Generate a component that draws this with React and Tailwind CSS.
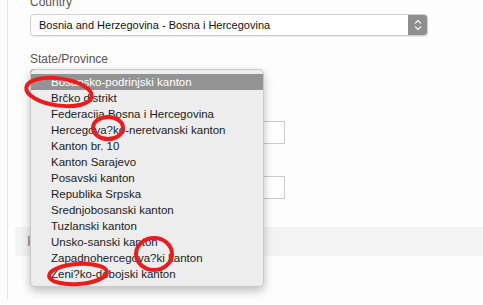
import React from 'react';

const states = [
  'Bosansko-podrinjski kanton',
  'Brčko distrikt',
  'Federacija Bosna i Hercegovina',
  'Hercegova?ko-neretvanski kanton',
  'Kanton br. 10',
  'Kanton Sarajevo',
  'Posavski kanton',
  'Republika Srpska',
  'Srednjobosanski kanton',
  'Tuzlanski kanton',
  'Unsko-sanski kanton',
  'Zapadnohercegova?ki kanton',
  'Zeni?ko-dobojski kanton',
];

// 빨간 원 표시 (스크린샷 위 주석)
const marks = [
  { cx: 59, cy: 92, rx: 33, ry: 13.5, rot: 8 },
  { cx: 108, cy: 128, rx: 15, ry: 11, rot: 0 },
  { cx: 154, cy: 254, rx: 18, ry: 16, rot: 0 },
  { cx: 78, cy: 274, rx: 29, ry: 10, rot: -4 },
];

const App = () => {
  return (
    <div
      className="relative w-[483px] h-[305px] overflow-hidden bg-[#fdfdfd] text-[11px]"
      style={{ fontFamily: '"Liberation Sans", Arial, sans-serif' }}
    >
      {/* 왼쪽 세로선 + 폼 영역 */}
      <div className="ml-[7px] h-full border-l border-[#e4e4e4] pl-[7px]">
        <div className="-mt-[6px] pl-[15px]">
          <label className="block h-[16px] text-[12px] leading-[16px] text-[#555]">Country</label>
          <div className="mt-[4px] flex h-[22px] w-[398px] items-stretch rounded-[4px] border border-[#cfcfcf] bg-white shadow-[0_1px_1px_rgba(0,0,0,0.08)]">
            <div className="flex-1 pl-[8px] text-[11px] leading-[20px] text-[#111]">
              Bosnia and Herzegovina - Bosna i Hercegovina
            </div>
            <div className="flex w-[19px] flex-col items-center justify-center rounded-r-[3px] bg-[#8e8e8e]">
              <svg width="8" height="12" viewBox="0 0 8 12" fill="none" stroke="#f2f2f2" strokeWidth="1.3">
                <path d="M1 4.5 L4 1.5 L7 4.5" />
                <path d="M1 7.5 L4 10.5 L7 7.5" />
              </svg>
            </div>
          </div>

          <label className="mt-[15px] block h-[16px] text-[12px] leading-[16px] text-[#555]">State/Province</label>
          <div className="mt-[2px] h-[22px] w-[202px] rounded-[4px] border border-[#8a8a8a] bg-[#9a9a9a]" />

          {/* 메뉴에 가려진 입력칸들 */}
          <div className="mt-[30px] h-[23px] w-[255px] border border-[#cccccc] bg-white" />
          <div className="mt-[32px] h-[23px] w-[255px] border border-[#cccccc] bg-white" />
        </div>

        <div className="mt-[28px] flex h-[29px] items-center rounded-l-[4px] bg-[#f3f3f3] pl-[12px] text-[14px] text-[#888]">
          P
        </div>
      </div>

      {/* 드롭다운 메뉴 */}
      <div className="absolute left-[30px] top-[69px] w-[234px] rounded-[5px] border border-[#c9c9c9] bg-[#ededed] py-[4px] shadow-[0_4px_10px_rgba(0,0,0,0.25)]">
        {states.map((s, i) => (
          <div
            key={i}
            className={
              i === 0
                ? 'h-[16px] bg-[#939393] pl-[20px] text-[11.5px] leading-[16px] text-white'
                : 'h-[16px] pl-[20px] text-[11.5px] leading-[16px] text-[#1b1b1b]'
            }
          >
            {s}
          </div>
        ))}
      </div>

      {/* 빨간 원 */}
      <svg className="pointer-events-none absolute left-0 top-0" width="483" height="305">
        {marks.map((m, i) => (
          <ellipse
            key={i}
            cx={m.cx}
            cy={m.cy}
            rx={m.rx}
            ry={m.ry}
            fill="none"
            stroke="#ec1c1c"
            strokeWidth="4"
            transform={`rotate(${m.rot} ${m.cx} ${m.cy})`}
          />
        ))}
      </svg>
    </div>
  );
};

export default App;
